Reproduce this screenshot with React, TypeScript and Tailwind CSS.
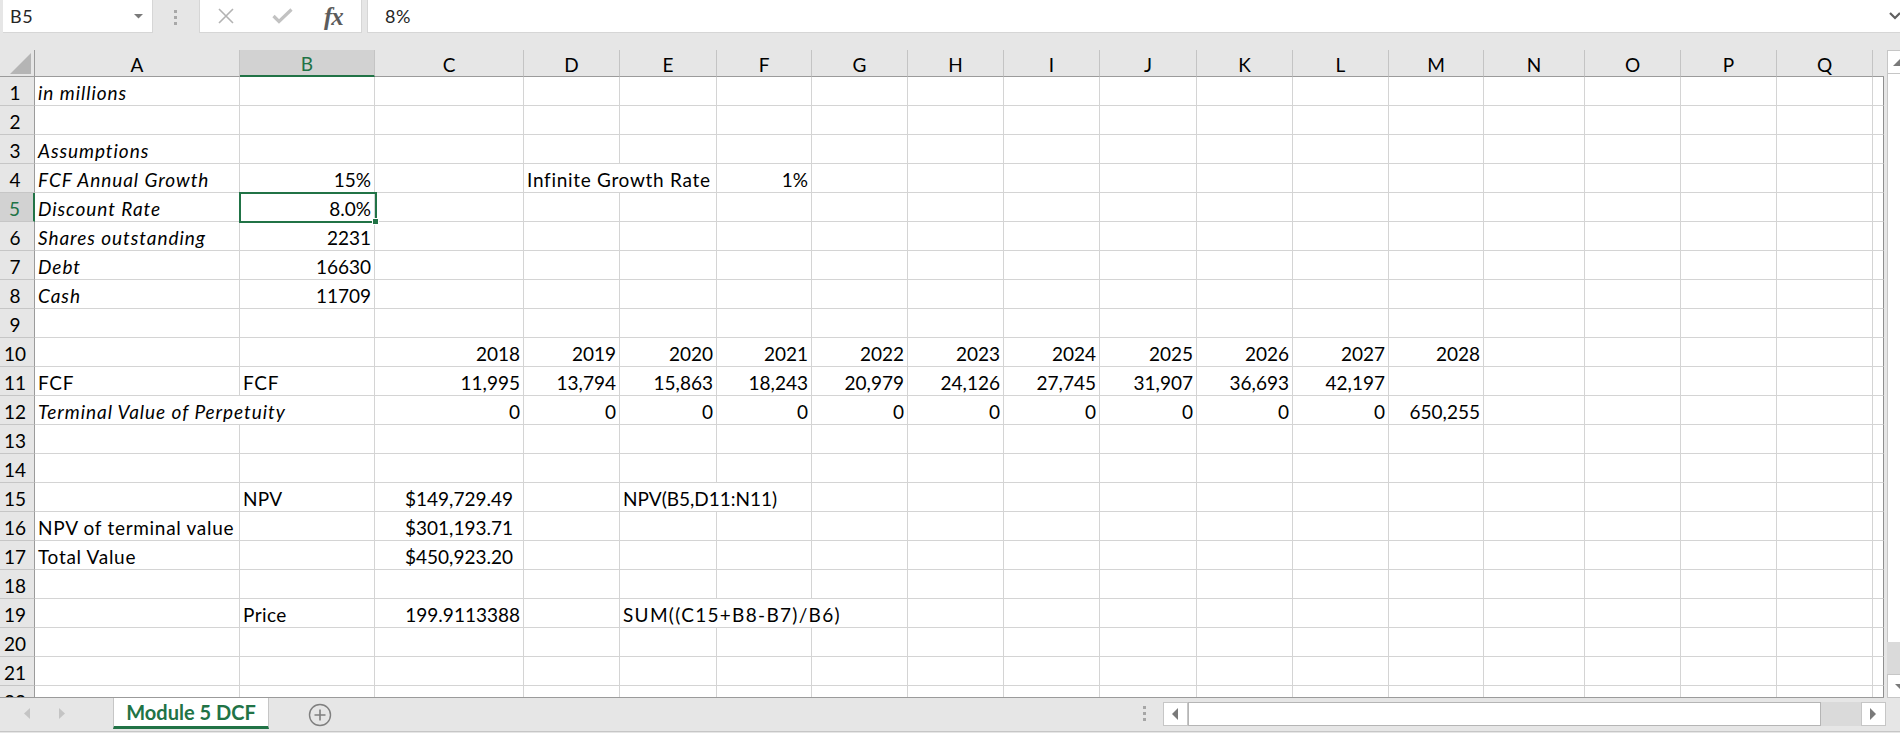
import React from 'react';

type Cell = { v: string; r?: boolean; i?: boolean; span?: number; acct?: boolean; tr?: string };

// A..Q plus the sliver of column R that is cut off at the right edge
const COLS = ['A', 'B', 'C', 'D', 'E', 'F', 'G', 'H', 'I', 'J', 'K', 'L', 'M', 'N', 'O', 'P', 'Q', ''];
const GRID =
  'grid grid-cols-[35px_205px_135px_149px_96px_97px_95px_96px_96px_96px_97px_96px_96px_95px_101px_96px_96px_96px_11px]';

const sheet: Record<number, Record<string, Cell>> = {
  1: { A: { v: 'in millions', i: true } },
  3: { A: { v: 'Assumptions', i: true } },
  4: {
    A: { v: 'FCF Annual Growth', i: true },
    B: { v: '15%', r: true },
    D: { v: 'Infinite Growth Rate', span: 2 },
    F: { v: '1%', r: true },
  },
  5: { A: { v: 'Discount Rate', i: true }, B: { v: '8.0%', r: true } },
  6: { A: { v: 'Shares outstanding', i: true }, B: { v: '2231', r: true } },
  7: { A: { v: 'Debt', i: true }, B: { v: '16630', r: true } },
  8: { A: { v: 'Cash', i: true }, B: { v: '11709', r: true } },
  10: {},
  11: { A: { v: 'FCF' }, B: { v: 'FCF' } },
  12: { A: { v: 'Terminal Value of Perpetuity', i: true, span: 2 } },
  15: {
    B: { v: 'NPV', tr: 'tracking-[0.2px]' },
    C: { v: '$149,729.49', r: true, acct: true },
    E: { v: 'NPV(B5,D11:N11)', span: 2, tr: 'tracking-normal' },
  },
  16: { A: { v: 'NPV of terminal value' }, C: { v: '$301,193.71', r: true, acct: true } },
  17: { A: { v: 'Total Value' }, C: { v: '$450,923.20', r: true, acct: true } },
  19: {
    B: { v: 'Price', tr: 'tracking-[0.4px]' },
    C: { v: '199.9113388', r: true },
    E: { v: 'SUM((C15+B8-B7)/B6)', span: 3, tr: 'tracking-[1.3px]' },
  },
};

const yearCols = ['C', 'D', 'E', 'F', 'G', 'H', 'I', 'J', 'K', 'L', 'M'];
const fcf = ['11,995', '13,794', '15,863', '18,243', '20,979', '24,126', '27,745', '31,907', '36,693', '42,197'];
yearCols.forEach((c, i) => {
  sheet[10][c] = { v: String(2018 + i), r: true };
  if (i < fcf.length) {
    sheet[11][c] = { v: fcf[i], r: true };
    sheet[12][c] = { v: '0', r: true };
  }
});
sheet[12].M = { v: '650,255', r: true };

const HeaderRow = () => (
  <div className={GRID + ' h-[27px]'}>
    <div className="border-r border-b border-r-[#9b9b9b] border-b-[#9b9b9b] bg-[#e6e6e6]">
      <svg width="34" height="26" className="block">
        <polygon points="10,24 31,3 31,24" fill="#b5b5b5" />
      </svg>
    </div>
    {COLS.map((c, i) => {
      const last = i === COLS.length - 1;
      const sel = c === 'B';
      let cls = 'flex items-end justify-center leading-[22px] bg-[#e6e6e6] border-b border-b-[#9b9b9b] border-r border-r-[#c4c4c4]';
      if (sel) cls = 'flex items-end justify-center leading-[22px] bg-[#d2d2d2] text-[#217346] border-b-2 border-b-[#217346] border-r border-r-[#c4c4c4]';
      if (last) cls = 'bg-[#e6e6e6] border-b border-b-[#9b9b9b]';
      return (
        <div key={i} className={cls}>
          {c}
        </div>
      );
    })}
  </div>
);

const SheetRow = ({ n }: { n: number }) => {
  const cells = sheet[n] || {};
  const out: React.ReactNode[] = [];
  const selRow = n === 5;
  out.push(
    <div
      key="h"
      className={
        selRow
          ? 'flex items-end justify-center pr-[4px] pb-[1px] leading-[22px] bg-[#d2d2d2] text-[#217346] border-b border-b-[#c6c6c6] border-r-2 border-r-[#217346]'
          : 'flex items-end justify-center pr-[4px] pb-[1px] leading-[22px] bg-[#e6e6e6] border-b border-b-[#c6c6c6] border-r border-r-[#9b9b9b]'
      }
    >
      {n}
    </div>
  );
  for (let ci = 0; ci < COLS.length; ci++) {
    const col = COLS[ci];
    const c = col ? cells[col] : undefined;
    const last = ci === COLS.length - 1;
    const span = c?.span ?? 1;
    // Lato letters run narrower than the sheet's font, digits don't: space out text only
    const track = c && !c.r ? c.tr ?? (c.i ? 'tracking-[0.95px]' : 'tracking-[0.7px]') : '';
    const cls = [
      'relative flex items-end pb-[1px] leading-[22px] whitespace-nowrap border-b border-b-[#d4d4d4] border-r',
      last ? 'border-r-[#8f8f8f]' : 'border-r-[#d4d4d4]',
      span === 2 ? 'col-span-2' : span === 3 ? 'col-span-3' : '',
      c?.r ? (c.acct ? 'justify-end pr-[10px]' : 'justify-end pr-[3px]') : 'pl-[3px]',
      c?.i ? 'italic' : '',
      track,
    ].join(' ');
    out.push(
      <div key={ci} className={cls}>
        {c?.v}
        {selRow && col === 'B' && (
          <div className="absolute -left-[1px] -top-[1px] w-[138px] h-[31px] border-2 border-[#217346] z-10">
            <div className="absolute -right-[4px] -bottom-[4px] w-[7px] h-[7px] bg-[#217346] border border-white" />
          </div>
        )}
      </div>
    );
    ci += span - 1;
  }
  return <div className={GRID + ' h-[29px]'}>{out}</div>;
};

const FormulaBar = () => (
  <div className="flex h-[34px] items-start text-[18px] text-[#262626] tracking-[0.6px]">
    <div className="ml-[3px] w-[150px] h-[33px] bg-white border-b border-r border-[#d6d6d6] flex items-center pl-[7px]">
      <span>B5</span>
      <svg width="9" height="5" className="ml-auto mr-[9px]">
        <polygon points="0,0 9,0 4.5,4.5" fill="#7a7a7a" />
      </svg>
    </div>
    <div className="ml-[21px] mt-[10px] flex flex-col gap-[3px]">
      <div className="w-[3px] h-[3px] bg-[#a8a8a8]" />
      <div className="w-[3px] h-[3px] bg-[#a8a8a8]" />
      <div className="w-[3px] h-[3px] bg-[#a8a8a8]" />
    </div>
    <div className="ml-[22px] w-[163px] h-[33px] bg-white border-b border-x border-[#d6d6d6] flex items-center">
      <svg width="16" height="16" className="ml-[18px]">
        <path d="M1 1 L15 15 M15 1 L1 15" stroke="#b3b3b3" strokeWidth="1.6" fill="none" />
      </svg>
      <svg width="21" height="16" className="ml-[38px]">
        <path d="M1.5 8 L7 13.5 L19.5 1.5" stroke="#c2c2c2" strokeWidth="3.2" fill="none" />
      </svg>
      <span className="ml-[31px] font-['Liberation_Serif',serif] italic font-bold text-[25px] text-[#5c5c5c] tracking-[-1px] leading-none">
        fx
      </span>
    </div>
    <div className="ml-[5px] flex-1 h-[33px] bg-white border-b border-l border-[#d6d6d6] flex items-center pl-[17px]">
      <span>8%</span>
      <svg width="12" height="8" className="ml-auto mr-[-1px]">
        <path d="M1 1 L6 6 L11 1" stroke="#606060" strokeWidth="2.2" fill="none" />
      </svg>
    </div>
  </div>
);

const VScroll = () => (
  <div className="w-[16px] h-[648px] pl-[3px] flex flex-col">
    <div className="h-[24px] bg-white border-l border-y border-[#c6c6c6] relative overflow-hidden">
      <svg width="13" height="24" className="block">
        <polygon points="5,15 12,8 19,15" fill="#7a7a7a" />
      </svg>
    </div>
    <div className="h-[568px] bg-white border-l border-[#c6c6c6]" />
    <div className="h-[32px] bg-[#dadada]" />
    <div className="flex-1 bg-white border-l border-y border-[#c6c6c6] overflow-hidden">
      <svg width="13" height="23" className="block">
        <polygon points="7,9 13,9 13,15" fill="#7a7a7a" />
      </svg>
    </div>
  </div>
);

const TabBar = () => (
  <div className="flex h-[34px] items-start border-b border-[#c6c6c6]">
    <div className="w-[113px] h-[31px] flex items-center">
      <svg width="7" height="11" className="ml-[24px]">
        <polygon points="6,0 6,11 0,5.5" fill="#c4c4c4" />
      </svg>
      <svg width="7" height="11" className="ml-[28px]">
        <polygon points="0,0 0,11 6,5.5" fill="#c4c4c4" />
      </svg>
    </div>
    <div className="w-[156px] h-[31px] bg-white border-x border-[#c6c6c6] border-b-[3px] border-b-[#217346] flex items-center justify-center font-bold text-[#217346] text-[20px] leading-none">
      Module 5 DCF
    </div>
    <svg width="24" height="24" className="ml-[39px] mt-[5px]">
      <circle cx="12" cy="12" r="10.5" stroke="#7f7f7f" strokeWidth="1.4" fill="none" />
      <path d="M12 6.5 V17.5 M6.5 12 H17.5" stroke="#7f7f7f" strokeWidth="1.6" />
    </svg>
    <div className="flex-1" />
    <div className="mt-[8px] flex flex-col gap-[3px]">
      <div className="w-[3px] h-[3px] bg-[#a6a6a6]" />
      <div className="w-[3px] h-[3px] bg-[#a6a6a6]" />
      <div className="w-[3px] h-[3px] bg-[#a6a6a6]" />
    </div>
    <div className="ml-[17px] mr-[14px] mt-[4px] h-[24px] w-[723px] flex">
      <div className="w-[25px] h-full bg-white border border-[#c6c6c6] flex items-center justify-center">
        <svg width="7" height="12">
          <polygon points="6,0 6,12 0,6" fill="#7a7a7a" />
        </svg>
      </div>
      <div className="w-[633px] h-full bg-white border border-[#b5b5b5]" />
      <div className="flex-1 h-full bg-[#dadada]" />
      <div className="w-[25px] h-full bg-white border border-[#c6c6c6] flex items-center justify-center">
        <svg width="7" height="12">
          <polygon points="0,0 0,12 6,6" fill="#7a7a7a" />
        </svg>
      </div>
    </div>
  </div>
);

export default function App() {
  const rows = Array.from({ length: 21 }, (_, i) => i + 1);
  return (
    <div className="w-[1900px] h-[733px] overflow-hidden bg-[#e6e6e6] font-['Lato',sans-serif] text-[19px] text-black">
      <FormulaBar />
      <div className="h-[16px]" />
      <div className="flex">
        <div className="w-[1884px] h-[648px] overflow-hidden border-b border-[#9b9b9b] bg-white">
          <HeaderRow />
          {rows.map((n) => (
            <SheetRow key={n} n={n} />
          ))}
          <div className="h-[11px] overflow-hidden">
            <SheetRow n={22} />
          </div>
        </div>
        <VScroll />
      </div>
      <TabBar />
    </div>
  );
}
